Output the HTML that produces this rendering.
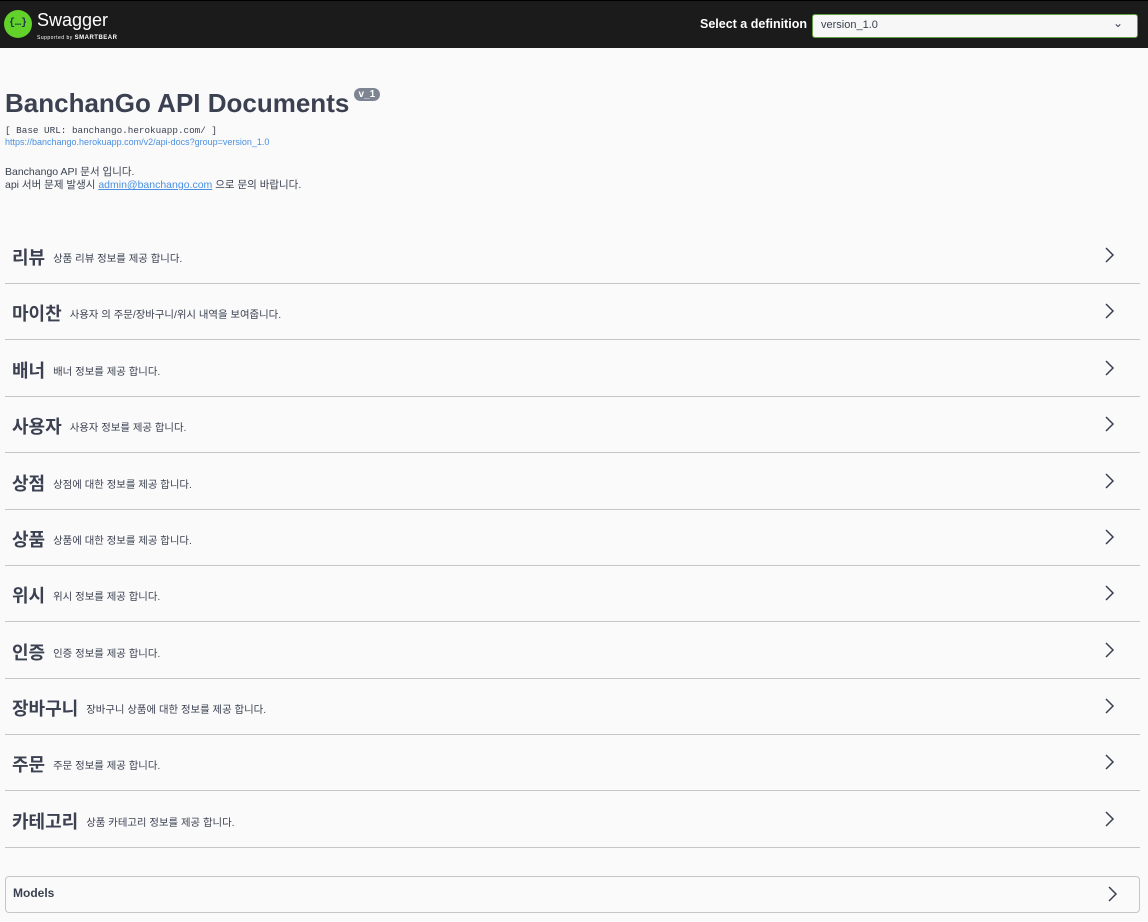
<!DOCTYPE html>
<html><head><meta charset="utf-8"><style>
*{margin:0;padding:0;box-sizing:border-box}
body{width:1148px;height:922px;background:#fafafa;font-family:"Liberation Sans","Noto Sans CJK KR",sans-serif;color:#3b4151;overflow:hidden;position:relative}
.top{height:48px;background:#1b1b1b;border-top:1px solid #000;position:relative}
.logo{position:absolute;left:4px;top:9px;width:28px;height:28px;border-radius:50%;background:#62d12a;color:#173647;font:bold 10px "Liberation Mono",monospace;text-align:center;line-height:28px}
.sw{position:absolute;left:37px;top:9px;color:#fff;font-size:18px}
.sb{position:absolute;left:37px;top:34px;color:#fff;font-size:5px;letter-spacing:.5px}
.sel-l{position:absolute;left:700px;top:16px;color:#fff;font-weight:bold;font-size:12.5px}
.sel{position:absolute;left:812px;top:13px;width:326px;height:24px;background:#f7f7f7;border:1px solid #62a03f;border-radius:3px;font-size:11px;padding:4px 8px;color:#3b4151}
.sel span{position:absolute;right:14px;top:1px;font-size:12px}
h1{position:absolute;left:5px;top:88px;font-size:26px;font-weight:bold;color:#3b4151;white-space:nowrap}
.v{display:inline-block;background:#7d8492;color:#fff;font-size:10px;border-radius:7px;padding:1px 5px;vertical-align:top;margin-top:0px;margin-left:-3px}
.base{position:absolute;left:5px;top:125px;font:9.3px "Liberation Mono",monospace;color:#3b4151}
.url{position:absolute;left:5px;top:137px;font-size:9px;color:#4990e2}
.desc{position:absolute;left:5px;top:166px;font-size:10.5px;line-height:13px;color:#3b4151}
.desc a{color:#4990e2;text-decoration:underline}
.row{position:absolute;left:5px;width:1135px;height:56px;border-bottom:1px solid #c4c6c9}
.row b{position:absolute;left:7px;top:16px;font-size:18px}
.row i{font-style:normal;font-size:10.4px;margin-left:8px;font-weight:normal;vertical-align:2px}
.chev{position:absolute;right:24px;top:19px;width:14px;height:16px}
.models{position:absolute;left:5px;top:876px;width:1135px;height:37px;border:1px solid #c4c6c9;border-radius:4px}
.models span{position:absolute;left:7px;top:9px;font-size:12px;font-weight:bold}
</style></head><body>
<div class="top">
<div class="logo">{…}</div>
<div class="sw">Swagger</div>
<div class="sb">Supported by <b style="font-size:6px">SMARTBEAR</b></div>
<div class="sel-l">Select a definition</div>
<div class="sel">version_1.0<span>⌄</span></div>
</div>
<h1>BanchanGo API Documents <span class="v">v_1</span></h1>
<div class="base">[ Base URL: banchango.herokuapp.com/ ]</div>
<div class="url">https://banchango.herokuapp.com/v2/api-docs?group=version_1.0</div>
<div class="desc">Banchango API 문서 입니다.<br>api 서버 문제 발생시 <a>admin@banchango.com</a> 으로 문의 바랍니다.</div>

<div class="row" style="top:228px"><b>리뷰<i>상품 리뷰 정보를 제공 합니다.</i></b><svg class="chev" viewBox="0 0 14 16"><path d="M4 1l7 7-7 7" fill="none" stroke="#3b4151" stroke-width="1.5"/></svg></div>
<div class="row" style="top:284px"><b>마이찬<i>사용자 의 주문/장바구니/위시 내역을 보여줍니다.</i></b><svg class="chev" viewBox="0 0 14 16"><path d="M4 1l7 7-7 7" fill="none" stroke="#3b4151" stroke-width="1.5"/></svg></div>
<div class="row" style="top:341px"><b>배너<i>배너 정보를 제공 합니다.</i></b><svg class="chev" viewBox="0 0 14 16"><path d="M4 1l7 7-7 7" fill="none" stroke="#3b4151" stroke-width="1.5"/></svg></div>
<div class="row" style="top:397px"><b>사용자<i>사용자 정보를 제공 합니다.</i></b><svg class="chev" viewBox="0 0 14 16"><path d="M4 1l7 7-7 7" fill="none" stroke="#3b4151" stroke-width="1.5"/></svg></div>
<div class="row" style="top:454px"><b>상점<i>상점에 대한 정보를 제공 합니다.</i></b><svg class="chev" viewBox="0 0 14 16"><path d="M4 1l7 7-7 7" fill="none" stroke="#3b4151" stroke-width="1.5"/></svg></div>
<div class="row" style="top:510px"><b>상품<i>상품에 대한 정보를 제공 합니다.</i></b><svg class="chev" viewBox="0 0 14 16"><path d="M4 1l7 7-7 7" fill="none" stroke="#3b4151" stroke-width="1.5"/></svg></div>
<div class="row" style="top:566px"><b>위시<i>위시 정보를 제공 합니다.</i></b><svg class="chev" viewBox="0 0 14 16"><path d="M4 1l7 7-7 7" fill="none" stroke="#3b4151" stroke-width="1.5"/></svg></div>
<div class="row" style="top:623px"><b>인증<i>인증 정보를 제공 합니다.</i></b><svg class="chev" viewBox="0 0 14 16"><path d="M4 1l7 7-7 7" fill="none" stroke="#3b4151" stroke-width="1.5"/></svg></div>
<div class="row" style="top:679px"><b>장바구니<i>장바구니 상품에 대한 정보를 제공 합니다.</i></b><svg class="chev" viewBox="0 0 14 16"><path d="M4 1l7 7-7 7" fill="none" stroke="#3b4151" stroke-width="1.5"/></svg></div>
<div class="row" style="top:735px"><b>주문<i>주문 정보를 제공 합니다.</i></b><svg class="chev" viewBox="0 0 14 16"><path d="M4 1l7 7-7 7" fill="none" stroke="#3b4151" stroke-width="1.5"/></svg></div>
<div class="row" style="top:792px"><b>카테고리<i>상품 카테고리 정보를 제공 합니다.</i></b><svg class="chev" viewBox="0 0 14 16"><path d="M4 1l7 7-7 7" fill="none" stroke="#3b4151" stroke-width="1.5"/></svg></div>

<div class="models"><span>Models</span><svg class="chev" style="top:9px;right:20px" viewBox="0 0 14 16"><path d="M4 1l7 7-7 7" fill="none" stroke="#3b4151" stroke-width="1.5"/></svg></div>
</body></html>
